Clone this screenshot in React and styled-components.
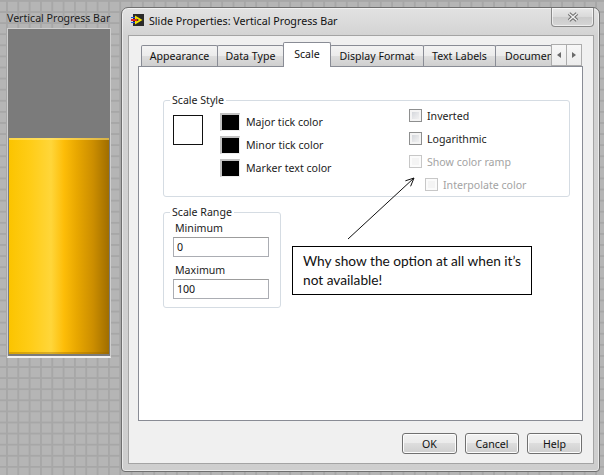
import styled, { createGlobalStyle } from 'styled-components';

const GlobalStyle = createGlobalStyle`
	html, body {
		margin: 0;
		padding: 0;
	}
	body {
		width: 604px;
		height: 475px;
		overflow: hidden;
		background-color: #b5b5b5;
		background-image:
			linear-gradient(to right, #a7a7a7 2px, transparent 2px),
			linear-gradient(to bottom, #a7a7a7 2px, transparent 2px);
		background-size: 11.33px 11.1px;
		background-position: 6px 0;
		font-family: 'Noto Sans', 'Liberation Sans', sans-serif;
		font-size: 10.6px;
		color: #1b1b1b;
	}
`;

const Page = styled.div`
	display: flex;
	align-items: flex-start;
	width: 604px;
	height: 475px;
`;

const LeftPane = styled.div`
	box-sizing: border-box;
	width: 121px;
	flex-shrink: 0;
	padding: 11px 0 0 7px;
`;

const Caption = styled.div`
	line-height: 15px;
	margin-bottom: 2px;
	white-space: nowrap;
`;

const Bar = styled.div`
	box-sizing: border-box;
	width: 104px;
	height: 330px;
	border: 1px solid #cfcfcf;
	border-bottom: 2px solid #f2f2f2;
	background: #7b7b7b;
	padding: 1px 1px 2px 1px;
	display: flex;
	flex-direction: column;
	justify-content: flex-end;
`;

const Fill = styled.div`
	height: 216px;
	background: linear-gradient(
		to right,
		#fbc400 0%,
		#ffcd18 22%,
		#ffd63a 42%,
		#fdbd08 55%,
		#e8a700 68%,
		#cc8e00 84%,
		#a06e00 100%
	);
	box-shadow: inset 0 2px 0 rgba(255, 232, 130, 0.55), inset 0 -2px 0 rgba(150, 100, 0, 0.35);
`;

const Dialog = styled.div`
	box-sizing: border-box;
	width: 479px;
	height: 465px;
	margin-top: 7px;
	flex-shrink: 0;
	border: 1px solid #6f6f6f;
	border-radius: 7px 7px 4px 4px;
	background: linear-gradient(#e2e2e2, #d3d3d3 28px, #cecece);
	box-shadow: inset 0 0 0 1px rgba(255, 255, 255, 0.55);
	display: flex;
	flex-direction: column;
	padding: 0 5px 7px 6px;
`;

const TitleBar = styled.div`
	height: 27px;
	display: flex;
	align-items: flex-start;
`;

const AppIcon = styled.svg`
	margin: 6px 5px 0 3px;
	flex-shrink: 0;
`;

const Title = styled.div`
	margin-top: 5px;
	line-height: 16px;
	font-size: 10.7px;
	color: #111;
	white-space: nowrap;
`;

const CloseButton = styled.div`
	box-sizing: border-box;
	margin-left: auto;
	width: 43px;
	height: 19px;
	border: 1px solid #8a8a8a;
	border-top: none;
	border-radius: 0 0 4px 4px;
	background: linear-gradient(#e9e9e9, #d9d9d9 50%, #cbcbcb 50%, #d6d6d6);
	box-shadow: inset 0 0 0 1px rgba(255, 255, 255, 0.6);
	display: flex;
	align-items: center;
	justify-content: center;
`;

const Client = styled.div`
	flex: 1;
	display: flex;
	flex-direction: column;
	background: #f0f0f0;
	border: 1px solid #a4a4a4;
	padding: 6px 10px 9px 9px;
`;

const TabStrip = styled.div`
	position: relative;
	z-index: 1;
	height: 24px;
	display: flex;
	align-items: flex-end;
	padding-left: 3px;
`;

const Tab = styled.div`
	box-sizing: border-box;
	flex-shrink: 0;
	width: ${p => p.$w}px;
	height: ${p => (p.$active ? 25 : 21)}px;
	margin-right: -1px;
	margin-bottom: ${p => (p.$active ? -1 : 0)}px;
	border: 1px solid #898c95;
	border-bottom: none;
	border-radius: 2px 2px 0 0;
	background: ${p =>
		p.$active
			? '#ffffff'
			: 'linear-gradient(#f3f3f3, #ebebeb 50%, #dddddd 50%, #cfcfcf)'};
	display: flex;
	align-items: center;
	justify-content: ${p => (p.$clip ? 'flex-start' : 'center')};
	padding: ${p => (p.$clip ? '0 0 0 9px' : '0')};
	padding-bottom: ${p => (p.$active ? 3 : 0)}px;
	overflow: hidden;
	white-space: nowrap;
	color: #111;
`;

const ScrollArrows = styled.div`
	display: flex;
	height: 22px;
	align-self: flex-end;
	flex-shrink: 0;
`;

const ArrowButton = styled.div`
	box-sizing: border-box;
	width: 16px;
	height: 22px;
	margin-right: -1px;
	border: 1px solid #acacac;
	background: linear-gradient(#f7f7f7, #ececec);
	display: flex;
	align-items: center;
	justify-content: center;
`;

const Panel = styled.div`
	flex: 1;
	position: relative;
	background: #ffffff;
	border: 1px solid #898c95;
	padding: 26px 12px 0 24px;
`;

const Group = styled.fieldset`
	box-sizing: border-box;
	margin: ${p => p.$gap || 0}px 0 0 0;
	padding: 0;
	width: ${p => (p.$w ? `${p.$w}px` : 'auto')};
	min-width: 0;
	border: 1px solid #d5dce3;
	border-radius: 3px;
`;

const Legend = styled.legend`
	margin-left: 6px;
	padding: 0 2px;
	line-height: 14px;
	color: #1b1b1b;
`;

const StyleBody = styled.div`
	display: flex;
	height: 89px;
	padding-left: 9px;
`;

const WhiteSwatch = styled.div`
	box-sizing: border-box;
	width: 30px;
	height: 30px;
	margin-top: 8px;
	border: 1px solid #111;
	background: #fff;
`;

const ColorList = styled.div`
	margin-left: 17px;
	padding-top: 3px;
	display: flex;
	flex-direction: column;
`;

const ColorRow = styled.div`
	height: 23px;
	display: flex;
	align-items: center;
	gap: 6px;
`;

const ColorSwatch = styled.span`
	box-sizing: border-box;
	width: 20px;
	height: 18px;
	background: #000;
	border-style: solid;
	border-width: 2px 1px 1px 2px;
	border-color: #c2c2c2 #ededed #ededed #c2c2c2;
`;

const CheckList = styled.div`
	margin-left: auto;
	width: 160px;
	margin-top: -3px;
	display: flex;
	flex-direction: column;
`;

const CheckRow = styled.div`
	height: 23px;
	display: flex;
	align-items: center;
	gap: 5px;
	padding-left: ${p => p.$indent || 0}px;
	color: ${p => (p.$disabled ? '#a3a3a3' : '#1b1b1b')};
`;

const Checkbox = styled.span`
	box-sizing: border-box;
	width: 13px;
	height: 13px;
	border: 1px solid ${p => (p.$disabled ? '#c7c7c7' : '#8e8f8f')};
	background: ${p =>
		p.$disabled
			? '#f4f4f4'
			: 'linear-gradient(135deg, #cbcfd5 0%, #e6e7e9 55%, #f6f6f6 100%)'};
	box-shadow: inset 0 0 0 2px ${p => (p.$disabled ? '#fbfbfb' : '#f4f4f4')};
`;

const RangeBody = styled.div`
	display: flex;
	flex-direction: column;
	padding: 1px 0 8px 9px;
`;

const FieldLabel = styled.div`
	line-height: 16px;
	padding-left: 2px;
	margin-top: ${p => p.$top || 0}px;
`;

const Field = styled.input`
	box-sizing: border-box;
	width: 96px;
	height: 20px;
	margin: 1px 0 0 0;
	padding: 0 3px;
	border: 1px solid #abadb3;
	border-top-color: #9c9c9c;
	background: #fff;
	font: inherit;
	color: #111;
	outline: none;
`;

const Callout = styled.div`
	position: absolute;
	left: 153px;
	top: 179px;
	box-sizing: border-box;
	width: 240px;
	height: 49px;
	border: 1px solid #000;
	background: #fff;
	padding: 4px 0 0 10px;
	font-family: Lato, 'Liberation Sans', sans-serif;
	font-size: 13.7px;
	line-height: 19px;
	white-space: nowrap;
	color: #111;
`;

const Pointer = styled.svg`
	position: absolute;
	left: 0;
	top: 0;
	pointer-events: none;
`;

const ButtonRow = styled.div`
	display: flex;
	justify-content: flex-end;
	gap: 8px;
	margin-top: 12px;
	padding-right: 1px;
`;

const Button = styled.div`
	box-sizing: border-box;
	width: ${p => p.$w}px;
	height: 21px;
	border: 1px solid #707070;
	border-radius: 3px;
	background: linear-gradient(#f2f2f2 0%, #ebebeb 45%, #dddddd 50%, #cfcfcf 100%);
	box-shadow: inset 0 0 0 1px #fcfcfc;
	display: flex;
	align-items: center;
	justify-content: center;
	color: #111;
`;

const tabs = [
	{ label: 'Appearance', w: 77 },
	{ label: 'Data Type', w: 67 },
	{ label: 'Scale', w: 48, active: true },
	{ label: 'Display Format', w: 94 },
	{ label: 'Text Labels', w: 73 },
	{ label: 'Documentation', w: 57, clip: true },
];

const colors = ['Major tick color', 'Minor tick color', 'Marker text color'];

const options = [
	{ label: 'Inverted' },
	{ label: 'Logarithmic' },
	{ label: 'Show color ramp', disabled: true },
	{ label: 'Interpolate color', disabled: true, indent: 16 },
];

function Triangle({ dir }) {
	return (
		<svg width='4' height='6' viewBox='0 0 4 6'>
			{dir === 'left' ? (
				<path d='M4 0 L0 3 L4 6 Z' fill='#6a6a6a' />
			) : (
				<path d='M0 0 L4 3 L0 6 Z' fill='#6a6a6a' />
			)}
		</svg>
	);
}

export default function App() {
	return (
		<Page>
			<GlobalStyle />
			<LeftPane>
				<Caption>Vertical Progress Bar</Caption>
				<Bar>
					<Fill />
				</Bar>
			</LeftPane>

			<Dialog>
				<TitleBar>
					<AppIcon width='13' height='12' viewBox='0 0 13 12'>
						<rect x='2' y='0' width='11' height='12' fill='#2a2a2a' />
						<path d='M4 1.5 L11.5 6 L4 10.5 Z' fill='#f6e200' />
						<path d='M5.5 4.5 L8 6 L5.5 7.5 Z' fill='#2a2a2a' />
						<rect x='0' y='5' width='6' height='2' fill='#e02020' />
						<rect x='0' y='3' width='4' height='1' fill='#2050e0' />
						<rect x='0' y='8' width='4' height='1' fill='#2050e0' />
					</AppIcon>
					<Title>Slide Properties: Vertical Progress Bar</Title>
					<CloseButton>
						<svg width='12' height='10' viewBox='0 0 12 10'>
							<path d='M2 1.5 L10 8.5 M10 1.5 L2 8.5' stroke='#6b6b6b' strokeWidth='3.6' />
							<path d='M2 1.5 L10 8.5 M10 1.5 L2 8.5' stroke='#f0f0f0' strokeWidth='1.6' />
						</svg>
					</CloseButton>
				</TitleBar>

				<Client>
					<TabStrip>
						{tabs.map(t => (
							<Tab key={t.label} $w={t.w} $active={t.active} $clip={t.clip}>
								{t.label}
							</Tab>
						))}
						<ScrollArrows>
							<ArrowButton>
								<Triangle dir='left' />
							</ArrowButton>
							<ArrowButton>
								<Triangle dir='right' />
							</ArrowButton>
						</ScrollArrows>
					</TabStrip>

					<Panel>
						<Group>
							<Legend>Scale Style</Legend>
							<StyleBody>
								<WhiteSwatch />
								<ColorList>
									{colors.map(c => (
										<ColorRow key={c}>
											<ColorSwatch />
											{c}
										</ColorRow>
									))}
								</ColorList>
								<CheckList>
									{options.map(o => (
										<CheckRow key={o.label} $disabled={o.disabled} $indent={o.indent}>
											<Checkbox $disabled={o.disabled} />
											{o.label}
										</CheckRow>
									))}
								</CheckList>
							</StyleBody>
						</Group>

						<Group $w={118} $gap={8}>
							<Legend>Scale Range</Legend>
							<RangeBody>
								<FieldLabel>Minimum</FieldLabel>
								<Field defaultValue='0' readOnly />
								<FieldLabel $top={5}>Maximum</FieldLabel>
								<Field defaultValue='100' readOnly />
							</RangeBody>
						</Group>

						<Pointer width='300' height='200'>
							<path d='M209 172 L275 111' stroke='#111' strokeWidth='1' fill='none' />
							<path d='M266.4 113.8 L275 111 L271.6 119.3' stroke='#111' strokeWidth='1' fill='none' />
						</Pointer>

						<Callout>
							Why show the option at all when it’s
							<br />
							not available!
						</Callout>
					</Panel>

					<ButtonRow>
						<Button $w={55}>OK</Button>
						<Button $w={54}>Cancel</Button>
						<Button $w={55}>Help</Button>
					</ButtonRow>
				</Client>
			</Dialog>
		</Page>
	);
}
